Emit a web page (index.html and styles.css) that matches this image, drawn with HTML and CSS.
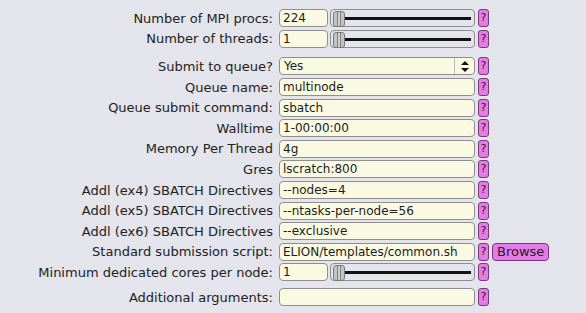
FILE: index.html
```html
<!DOCTYPE html>
<html>
<head>
    <title>Job Submission</title>
    <link rel="stylesheet" href="styles.css">
</head>
<body>
    <div class="form">
        <div class="row">
            <label class="label">Number of MPI procs:</label>
            <div class="field">
                <input class="input num" type="text" value="224">
                <div class="slider"><div class="track"></div><div class="handle"></div></div>
            </div>
            <button class="help">?</button>
        </div>
        <div class="row">
            <label class="label">Number of threads:</label>
            <div class="field">
                <input class="input num" type="text" value="1">
                <div class="slider"><div class="track"></div><div class="handle"></div></div>
            </div>
            <button class="help">?</button>
        </div>

        <div class="row spaced">
            <label class="label">Submit to queue?</label>
            <div class="field">
                <div class="select">
                    <span class="sel-text">Yes</span>
                    <span class="sel-arrow">
                        <svg width="8" height="11" viewBox="0 0 8 11"><path d="M4 0 L8 4 L0 4 Z M0 7 L8 7 L4 11 Z" fill="#111"/></svg>
                    </span>
                </div>
            </div>
            <button class="help">?</button>
        </div>
        <div class="row">
            <label class="label">Queue name:</label>
            <div class="field"><input class="input" type="text" value="multinode"></div>
            <button class="help">?</button>
        </div>
        <div class="row">
            <label class="label">Queue submit command:</label>
            <div class="field"><input class="input" type="text" value="sbatch"></div>
            <button class="help">?</button>
        </div>
        <div class="row">
            <label class="label">Walltime</label>
            <div class="field"><input class="input" type="text" value="1-00:00:00"></div>
            <button class="help">?</button>
        </div>
        <div class="row">
            <label class="label">Memory Per Thread</label>
            <div class="field"><input class="input" type="text" value="4g"></div>
            <button class="help">?</button>
        </div>
        <div class="row">
            <label class="label">Gres</label>
            <div class="field"><input class="input" type="text" value="lscratch:800"></div>
            <button class="help">?</button>
        </div>
        <div class="row">
            <label class="label">Addl (ex4) SBATCH Directives</label>
            <div class="field"><input class="input" type="text" value="--nodes=4"></div>
            <button class="help">?</button>
        </div>
        <div class="row">
            <label class="label">Addl (ex5) SBATCH Directives</label>
            <div class="field"><input class="input" type="text" value="--ntasks-per-node=56"></div>
            <button class="help">?</button>
        </div>
        <div class="row">
            <label class="label">Addl (ex6) SBATCH Directives</label>
            <div class="field"><input class="input" type="text" value="--exclusive"></div>
            <button class="help">?</button>
        </div>
        <div class="row">
            <label class="label">Standard submission script:</label>
            <div class="field"><div class="input clip">ELION/templates/common.sh</div></div>
            <button class="help">?</button>
            <button class="browse">Browse</button>
        </div>
        <div class="row">
            <label class="label">Minimum dedicated cores per node:</label>
            <div class="field">
                <input class="input num" type="text" value="1">
                <div class="slider"><div class="track"></div><div class="handle"></div></div>
            </div>
            <button class="help">?</button>
        </div>

        <div class="row spaced-small">
            <label class="label">Additional arguments:</label>
            <div class="field"><input class="input" type="text" value=""></div>
            <button class="help">?</button>
        </div>
    </div>
</body>
</html>
```

FILE: styles.css
```css
body {
    margin: 0;
    background: #e4e4ec;
    font-family: "DejaVu Sans", Verdana, sans-serif;
    font-size: 13px;
    color: #222;
}
.form {
    padding-top: 8px;
    display: flex;
    flex-direction: column;
}
.row {
    display: flex;
    align-items: center;
    height: 20.6px;
}
.spaced {
    margin-top: 7px;
}
.spaced-small {
    margin-top: 4px;
}
.label {
    width: 279px;
    text-align: right;
    padding-right: 6px;
    box-sizing: border-box;
    white-space: nowrap;
}
.field {
    width: 196px;
    display: flex;
    gap: 2px;
}
.input {
    box-sizing: border-box;
    width: 100%;
    height: 18px;
    margin: 0;
    padding: 0 3px;
    border: 1px solid #8e8e8e;
    border-radius: 4px;
    background: #fafae2;
    font-family: "DejaVu Sans", Verdana, sans-serif;
    font-size: 12px;
    color: #1c1c1c;
    line-height: 16px;
}
.clip {
    overflow: hidden;
    white-space: nowrap;
}
.num {
    width: 49px;
    flex: none;
}
.slider {
    flex: 1;
    height: 18px;
    box-sizing: border-box;
    border: 1px solid #8e8e8e;
    border-radius: 4px;
    position: relative;
}
.track {
    position: absolute;
    left: 4px;
    right: 3px;
    top: 7px;
    height: 3px;
    background: #111;
}
.handle {
    position: absolute;
    left: 2px;
    top: 1px;
    width: 10px;
    height: 14px;
    border: 1px solid #7a7a7a;
    border-radius: 3px;
    background: linear-gradient(90deg, #c4c4c4 0, #c4c4c4 3px, #808080 3px, #808080 4px, #d0d0d0 4px, #d0d0d0 6px, #808080 6px, #808080 7px, #c4c4c4 7px);
}
.select {
    box-sizing: border-box;
    width: 100%;
    height: 18px;
    border: 1px solid #8e8e8e;
    border-radius: 4px;
    background: #fafae2;
    display: flex;
    align-items: center;
    padding-left: 4px;
    font-size: 12px;
}
.sel-text {
    flex: 1;
}
.sel-arrow {
    width: 19px;
    height: 16px;
    border-left: 1px solid #b8b8b8;
    display: flex;
    align-items: center;
    justify-content: center;
}
.help {
    margin: 0 0 0 3px;
    padding: 0;
    width: 11px;
    height: 18px;
    border: 1px solid #7a3a7a;
    border-radius: 3px;
    background: #e47ce8;
    font-family: "DejaVu Sans", Verdana, sans-serif;
    font-size: 11px;
    color: #2a1a2a;
    line-height: 16px;
}
.browse {
    margin: 0 0 0 3px;
    padding: 0 4px;
    height: 18px;
    border: 1px solid #7a3a7a;
    border-radius: 4px;
    background: #e47ce8;
    font-family: "DejaVu Sans", Verdana, sans-serif;
    font-size: 13px;
    color: #2a1a2a;
    line-height: 16px;
}
```
